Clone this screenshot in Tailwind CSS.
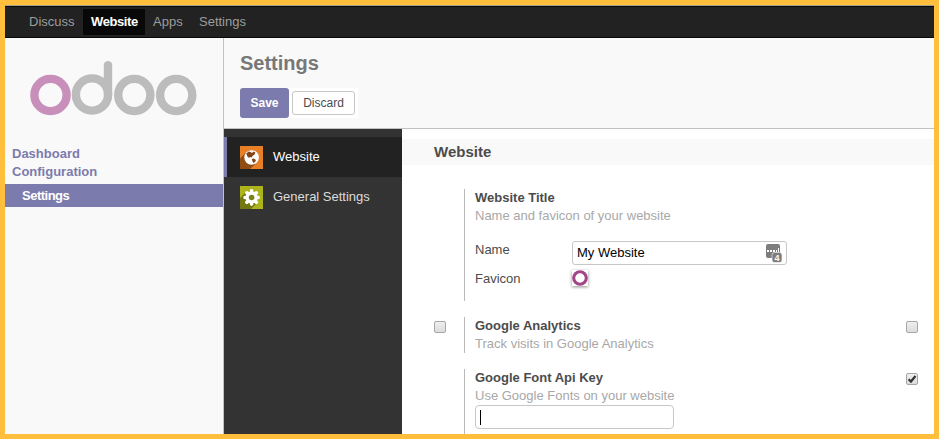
<!DOCTYPE html>
<html lang="en">
<head>
<meta charset="utf-8">
<title>Settings</title>
<script src="https://cdn.jsdelivr.net/npm/@tailwindcss/browser@4"></script>
</head>
<body class="w-[939px] h-[439px] overflow-hidden font-['Liberation_Sans',Arial,sans-serif] text-[13px] leading-[18px] text-[#4c4c4c]">
<div class="w-[939px] h-[439px] border-5 border-[#ffbf3c] flex flex-col bg-white overflow-hidden">
  <nav class="h-[33px] shrink-0 bg-[#222] border-t border-b border-t-[#a3a28e] border-b-[#080808] text-[#9d9d9d] flex">
    <div class="flex w-full border-t border-[#080808] pt-[2px] pl-4 leading-[26px]">
      <a class="w-[62px] h-[26px] pl-2">Discuss</a>
      <a class="w-[62px] h-[26px] pl-[8px] bg-[#080808] text-white font-bold tracking-[-0.4px]">Website</a>
      <a class="w-[46px] h-[26px] pl-2">Apps</a>
      <a class="h-[26px] pl-2">Settings</a>
    </div>
  </nav>
  <div class="flex flex-1 min-h-0">
    <aside class="w-[219px] shrink-0 bg-[#f9f9f9] border-r border-[#c2c2c2]">
      <svg class="block ml-[24px] mt-[22px]" width="170" height="58" viewBox="0 0 170 58" fill="none" stroke="#bbbcbb" stroke-width="8.4">
        <circle cx="21.5" cy="35" r="16.1" stroke="#c88fbb"/>
        <circle cx="63" cy="34.5" r="16.1"/>
        <path d="M79 34.5V5.2" stroke-linecap="round"/>
        <circle cx="105.3" cy="35" r="16.1"/>
        <circle cx="147.2" cy="35" r="16.1"/>
      </svg>
      <div class="pt-[27px] pl-[7px] font-bold text-[#7c7bad]">
        <div class="leading-[18px]">Dashboard</div>
        <div class="leading-[18px]">Configuration</div>
      </div>
      <div class="mt-[3px] h-[23px] bg-[#7c7bad] text-white font-bold pl-[17px] leading-[23px] tracking-[-0.5px]">Settings</div>
    </aside>
    <div class="flex-1 flex flex-col min-w-0">
      <header class="h-[91px] shrink-0 bg-[#f9f9f9] border-b border-[#c2c2c2] pl-4 pt-[13px]">
        <h1 class="text-[20px] leading-[24px] font-bold text-[#777]">Settings</h1>
        <div class="flex mt-[13px] h-[30px] w-[118px] bg-white rounded-l-[3px]">
          <button class="w-[49px] h-[30px] rounded-[3px] bg-[#7c7bad] text-white font-bold text-[12px]">Save</button>
          <button class="ml-[3px] mt-[3px] w-[63px] h-[24px] rounded-[3px] border border-[#c7c7c7] bg-white text-[12px] leading-[22px]">Discard</button>
        </div>
      </header>
      <div class="flex flex-1 min-h-0">
        <div class="w-[178px] shrink-0 bg-[#333] pt-2">
          <div class="h-10 flex items-center bg-[#222] border-l-3 border-[#7c7bad] pl-[13px] text-white">
            <svg width="23" height="23" viewBox="0 0 23 23">
              <path fill="#e77f27" d="M0 0h23v23H0z"/>
              <path fill="#904c15" d="M6.5 6 0 12.5V23h10l7-6.5z"/>
              <circle cx="11.6" cy="11.5" r="7.3" fill="#fff"/>
              <path fill="#82451a" d="M6.3 7.6 8.6 5.4l2.2.6 1.2 1.2 1.2-1.6 2.2.9-.8 1.9-1.8 1.4-1.3 1.7-1.9-.4-.3 1.1-1.9-1.6-.8-2zM11.8 13l2-.4 2.2 1.3-.9 2-1.7 1.2-1-1.8z"/>
            </svg>
            <span class="ml-[10px]">Website</span>
          </div>
          <div class="h-10 flex items-center pl-4 text-[#dcdcdc]">
            <svg width="23" height="23" viewBox="0 0 23 23">
              <path fill="#acb31d" d="M0 0h23v23H0z"/>
              <path fill="#737813" d="M6 6 0 12v11h11l6-6z"/>
              <g stroke="#fff" stroke-width="3.6" stroke-linecap="round">
                <path d="M11.6 4.9v13.2M5 11.5h13.2M6.9 6.8l9.4 9.4M16.3 6.8l-9.4 9.4"/>
              </g>
              <circle cx="11.6" cy="11.5" r="6" fill="#fff"/>
              <circle cx="11.6" cy="11.5" r="2.8" fill="#7d8217"/>
            </svg>
            <span class="ml-[10px]">General Settings</span>
          </div>
        </div>
        <main class="flex-1 bg-white pt-[10px] min-w-0">
          <h2 class="h-[26px] bg-[#f9f9f9] pl-8 text-[15px] leading-[26px] font-bold">Website</h2>
          <section class="mt-6 ml-[62px] h-[112px] border-l border-[#b8b8b8] pl-[10px]">
            <div class="font-bold">Website Title</div>
            <div class="text-[#a8a8a8]">Name and favicon of your website</div>
            <div class="flex mt-4">
              <div class="w-[97px] leading-[18px]">Name</div>
              <div class="w-[215px] h-6 border border-[#c7c7c7] rounded-[3px] pl-1 leading-[22px] text-black flex justify-between pr-[4px]">
                <span>My Website</span>
                <svg class="mt-[2px]" width="17" height="19" viewBox="0 0 17 19">
                  <rect x="1" width="14" height="14" rx="2" fill="#7d7d7d"/>
                  <path fill="#fff" d="M2 6h2v2H2zM5 6h2v2H5zM8 6h2v2H8zM11 6h1v2h-1zM13 4h1v4h-1z"/>
                  <rect x="7" y="8.5" width="10" height="10" rx="2.5" fill="#7d7d7d" stroke="#fff" stroke-width=".6"/>
                  <text x="12" y="16.7" font-size="9" font-weight="bold" text-anchor="middle" fill="#fff">4</text>
                </svg>
              </div>
            </div>
            <div class="flex mt-[5px]">
              <div class="w-[97px] leading-[18px]">Favicon</div>
              <div class="w-4 h-4 bg-white shadow-[0_1px_3px_rgba(0,0,0,0.45)]">
                <svg width="16" height="16" viewBox="0 0 16 16"><circle cx="8" cy="8" r="6.3" fill="none" stroke="#a24689" stroke-width="3.1"/></svg>
              </div>
            </div>
          </section>
          <section class="mt-4 h-9 flex">
            <div class="w-[62px] pl-8 pt-1"><div class="w-3 h-3 rounded-[2px] border border-[#a6a6a6] bg-linear-to-b from-[#eee] to-[#dcdcdc]"></div></div>
            <div class="border-l border-[#b8b8b8] pl-[10px] w-[442px]">
              <div class="font-bold">Google Analytics</div>
              <div class="text-[#a8a8a8]">Track visits in Google Analytics</div>
            </div>
            <div class="mt-1 w-3 h-3 rounded-[2px] border border-[#a6a6a6] bg-linear-to-b from-[#eee] to-[#dcdcdc]"></div>
          </section>
          <section class="mt-4 h-[65px] flex">
            <div class="ml-[62px] border-l border-[#b8b8b8] pl-[10px] w-[442px]">
              <div class="font-bold">Google Font Api Key</div>
              <div class="text-[#a8a8a8]">Use Google Fonts on your website</div>
              <div class="w-[199px] h-6 border border-[#c7c7c7] rounded-[4px] pl-1 pt-1"><div class="w-px h-[15px] bg-black"></div></div>
            </div>
            <div class="mt-1 w-3 h-3 rounded-[2px] border border-[#a6a6a6] bg-linear-to-b from-[#eee] to-[#dcdcdc]">
              <svg class="block" width="10" height="10" viewBox="0 0 10 10"><path d="M1.6 5.2 3.9 7.5 8.5 2" fill="none" stroke="#333" stroke-width="2.2"/></svg>
            </div>
          </section>
        </main>
      </div>
    </div>
  </div>
</div>
</body>
</html>
